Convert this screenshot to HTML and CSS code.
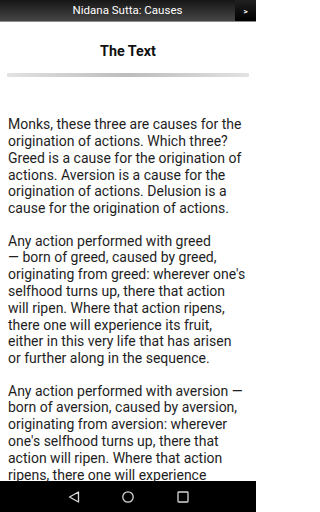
FILE: index.html
```html
<!DOCTYPE html>
<html>
<head>
<meta charset="utf-8">
<link rel="stylesheet" href="styles.css">
</head>
<body>
<div class="screen">
<header class="topbar">
  <div class="topbar-title">Nidana Sutta: Causes</div>
  <div class="topbar-btn"><span class="arrow">&gt;</span></div>
</header>
<main class="content">
  <h1 class="heading">The Text</h1>
  <div class="rule"></div>
  <p class="para first">Monks, these three are causes for the origination of actions. Which three? Greed is a cause for the origination of actions. Aversion is a cause for the origination of actions. Delusion is a cause for the origination of actions.</p>
  <p class="para">Any action performed with greed —&nbsp;born of greed, caused by greed, originating from greed: wherever one's selfhood turns up, there that action will ripen. Where that action ripens, there one will experience its fruit, either in this very life that has arisen or&nbsp;further along in the sequence.</p>
  <p class="para">Any action performed with aversion — born of aversion, caused by aversion, originating from aversion: wherever one's selfhood turns up, there that action will ripen. Where that action ripens, there one will experience its&nbsp;fruit, either in this very life that has arisen or further along in the sequence.</p>
</main>
<nav class="navbar">
  <svg class="nav-icon" width="12" height="12" viewBox="0 0 12 12"><path d="M10.5 1 L1.5 6 L10.5 11 Z" fill="none" stroke="#d8d8d8" stroke-width="1.3" stroke-linejoin="round"/></svg>
  <svg class="nav-icon" width="12" height="12" viewBox="0 0 12 12"><circle cx="6" cy="6" r="5.2" fill="none" stroke="#d8d8d8" stroke-width="1.3"/></svg>
  <svg class="nav-icon" width="12" height="12" viewBox="0 0 12 12"><rect x="1" y="1" width="10" height="10" rx="0.8" fill="none" stroke="#d8d8d8" stroke-width="1.3"/></svg>
</nav>
</div>
</body>
</html>
```
FILE: styles.css
```css
html, body {
  margin: 0;
  padding: 0;
  background: #ffffff;
  height: 512px;
  overflow: hidden;
}
body {
  font-family: Roboto, "Noto Sans", sans-serif;
  color: #1e1e1e;
}
.screen {
  position: relative;
  width: 256px;
  height: 512px;
  overflow: hidden;
}
.topbar {
  height: 21px;
  display: flex;
  align-items: stretch;
  background: linear-gradient(#161616, #454545);
  border-bottom: 1px solid #8a8a8a;
}
.topbar-title {
  flex: 1;
  padding-left: 20px;
  color: #ffffff;
  font-size: 11.5px;
  line-height: 21px;
  text-align: center;
}
.topbar-btn {
  width: 21px;
  background: linear-gradient(#202020, #000000);
  display: flex;
  align-items: center;
  justify-content: center;
}
.arrow {
  color: #ffffff;
  font-size: 8px;
  font-weight: bold;
  line-height: 1;
  margin-top: 2px;
}
.content {
  padding: 0 8px;
}
.heading {
  margin: 0;
  padding-top: 19px;
  font-size: 14.3px;
  font-weight: bold;
  text-align: center;
  line-height: 20px;
  color: #111111;
}
.rule {
  margin: 12px -1px 0;
  height: 3.5px;
  border-radius: 1px;
  background: linear-gradient(90deg, #e2e2e2, #bdbdbd 50%, #e2e2e2);
}
.para {
  margin: 15.6px 0 0;
  font-size: 14px;
  line-height: 16.8px;
}
.para.first {
  margin-top: 39.8px;
}
.navbar {
  position: absolute;
  left: 0;
  right: 0;
  bottom: 0;
  height: 31px;
  background: #000000;
  display: flex;
  justify-content: center;
  align-items: center;
  gap: 42.5px;
}
```
